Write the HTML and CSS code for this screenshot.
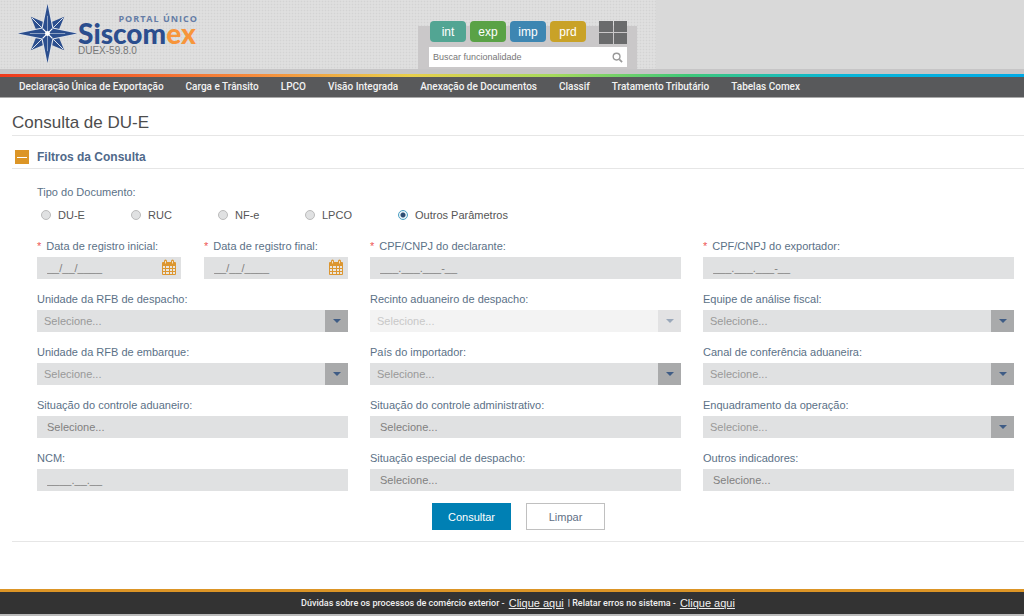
FILE: index.html
```html
<!DOCTYPE html>
<html lang="pt-BR">
<head>
<meta charset="utf-8">
<meta name="viewport" content="width=device-width, initial-scale=1">
<title>Consulta de DU-E</title>
<link rel="stylesheet" href="styles.css">
</head>
<body>
<header class="header">
  <div class="brand">
    <svg class="star" viewBox="0 0 60 60" aria-hidden="true">
      <path d="M13 13 30 20 47 13 40 30 47 47 30 40 13 47 20 30Z" fill="#2b4e8e"/>
      <path d="M14 14 46 46M46 14 14 46" stroke="#dfe5ee" stroke-width="1"/>
      <path d="M30 2 35 25 58 30 35 35 30 58 25 35 2 30 25 25Z" fill="none" stroke="#dfe3ea" stroke-width="2.500"/>
      <path d="M30 0 35 25 60 30 35 35 30 60 25 35 0 30 25 25Z" fill="#2b4e8e"/>
      <path d="M30 12V48M12 30H48" stroke="#b9c6da" stroke-width=".7"/>
      <path d="M25 25 35 35M35 25 25 35" stroke="#fff" stroke-width="1.200"/>
      <circle cx="30" cy="30" r="2.500" fill="#fff"/>
    </svg>
    <div class="brand-text">
      <span class="brand-top">PORTAL ÚNICO</span>
      <span class="brand-name">Siscom<span class="brand-accent">ex</span></span>
      <span class="brand-version">DUEX-59.8.0</span>
    </div>
  </div>
  <div class="tools">
    <div class="tabs">
      <button type="button" class="tab tab-int">int</button>
      <button type="button" class="tab tab-exp">exp</button>
      <button type="button" class="tab tab-imp">imp</button>
      <button type="button" class="tab tab-prd">prd</button>
      <button type="button" class="apps" aria-label="Aplicações"><i></i><i></i><i></i><i></i></button>
    </div>
    <div class="search">
      <input type="text" placeholder="Buscar funcionalidade" aria-label="Buscar funcionalidade">
      <button type="button" aria-label="Buscar"><svg viewBox="0 0 12 12" aria-hidden="true"><circle cx="5" cy="5" r="3.700" fill="none" stroke="#999" stroke-width="1.500"/><path d="M8 8 11 11" stroke="#999" stroke-width="1.800"/></svg></button>
    </div>
  </div>
</header>
<nav class="nav">
  <a href="#">Declaração Única de Exportação</a>
  <a href="#">Carga e Trânsito</a>
  <a href="#">LPCO</a>
  <a href="#">Visão Integrada</a>
  <a href="#">Anexação de Documentos</a>
  <a href="#">Classif</a>
  <a href="#">Tratamento Tributário</a>
  <a href="#">Tabelas Comex</a>
</nav>
<main class="main">
  <h1 class="title">Consulta de DU-E</h1>
  <h2 class="section"><button type="button" class="toggle" aria-label="Recolher filtros"></button>Filtros da Consulta</h2>
  <form class="form">
    <fieldset class="types">
      <legend>Tipo do Documento:</legend>
      <div class="radios">
        <label><input type="radio" name="tipo">DU-E</label>
        <label><input type="radio" name="tipo">RUC</label>
        <label><input type="radio" name="tipo">NF-e</label>
        <label><input type="radio" name="tipo">LPCO</label>
        <label><input type="radio" name="tipo" checked>Outros Parâmetros</label>
      </div>
    </fieldset>
    <div class="grid">
      <div class="dates">
        <div class="field">
          <label for="ini" class="required">Data de registro inicial:</label>
          <div class="box"><input id="ini" type="text" placeholder="__/__/____"><button type="button" class="cal" aria-label="Abrir calendário"><svg viewBox="0 0 16 16" aria-hidden="true"><rect x="1" y="2" width="14" height="13" rx="1" fill="#dc9630"/><path d="M4.500 1v2M11.500 1v2" stroke="#dc9630" stroke-width="3" stroke-linecap="round"/><path d="M4.500 1v2.500M11.500 1v2.500" stroke="#f4dfbd" stroke-width="1"/><path d="M2 6h2v2h-2zM5 6h3v2h-3zM9 6h2v2h-2zM12 6h2v2h-2zM2 9h2v2h-2zM5 9h3v2h-3zM9 9h2v2h-2zM12 9h2v2h-2zM2 12h2v2h-2zM5 12h3v2h-3zM9 12h2v2h-2zM12 12h2v2h-2z" fill="#eae6de"/></svg></button></div>
        </div>
        <div class="field">
          <label for="fim" class="required">Data de registro final:</label>
          <div class="box"><input id="fim" type="text" placeholder="__/__/____"><button type="button" class="cal" aria-label="Abrir calendário"><svg viewBox="0 0 16 16" aria-hidden="true"><rect x="1" y="2" width="14" height="13" rx="1" fill="#dc9630"/><path d="M4.500 1v2M11.500 1v2" stroke="#dc9630" stroke-width="3" stroke-linecap="round"/><path d="M4.500 1v2.500M11.500 1v2.500" stroke="#f4dfbd" stroke-width="1"/><path d="M2 6h2v2h-2zM5 6h3v2h-3zM9 6h2v2h-2zM12 6h2v2h-2zM2 9h2v2h-2zM5 9h3v2h-3zM9 9h2v2h-2zM12 9h2v2h-2zM2 12h2v2h-2zM5 12h3v2h-3zM9 12h2v2h-2zM12 12h2v2h-2z" fill="#eae6de"/></svg></button></div>
        </div>
      </div>
      <div class="field"><label for="decl" class="required">CPF/CNPJ do declarante:</label><div class="box"><input id="decl" type="text" placeholder="___.___.___-__"></div></div>
      <div class="field"><label for="exp" class="required">CPF/CNPJ do exportador:</label><div class="box"><input id="exp" type="text" placeholder="___.___.___-__"></div></div>

      <div class="field"><label for="urfd">Unidade da RFB de despacho:</label><div class="combo"><select id="urfd"><option>Selecione...</option></select><span class="arrow"></span></div></div>
      <div class="field"><label for="rec">Recinto aduaneiro de despacho:</label><div class="combo disabled"><select id="rec" disabled><option>Selecione...</option></select><span class="arrow"></span></div></div>
      <div class="field"><label for="eq">Equipe de análise fiscal:</label><div class="combo"><select id="eq"><option>Selecione...</option></select><span class="arrow"></span></div></div>

      <div class="field"><label for="urfe">Unidade da RFB de embarque:</label><div class="combo"><select id="urfe"><option>Selecione...</option></select><span class="arrow"></span></div></div>
      <div class="field"><label for="pais">País do importador:</label><div class="combo"><select id="pais"><option>Selecione...</option></select><span class="arrow"></span></div></div>
      <div class="field"><label for="canal">Canal de conferência aduaneira:</label><div class="combo"><select id="canal"><option>Selecione...</option></select><span class="arrow"></span></div></div>

      <div class="field"><label for="sitc">Situação do controle aduaneiro:</label><div class="box"><input id="sitc" type="text" placeholder="Selecione..."></div></div>
      <div class="field"><label for="sita">Situação do controle administrativo:</label><div class="box"><input id="sita" type="text" placeholder="Selecione..."></div></div>
      <div class="field"><label for="enq">Enquadramento da operação:</label><div class="combo"><select id="enq"><option>Selecione...</option></select><span class="arrow"></span></div></div>

      <div class="field"><label for="ncm">NCM:</label><div class="box"><input id="ncm" type="text" placeholder="____.__.__"></div></div>
      <div class="field"><label for="site">Situação especial de despacho:</label><div class="box"><input id="site" type="text" placeholder="Selecione..."></div></div>
      <div class="field"><label for="out">Outros indicadores:</label><div class="box"><input id="out" type="text" placeholder="Selecione..."></div></div>
    </div>
    <div class="actions">
      <button type="submit" class="btn btn-primary">Consultar</button>
      <button type="reset" class="btn">Limpar</button>
    </div>
  </form>
</main>
<footer class="footer">
  <span>Dúvidas sobre os processos de comércio exterior -</span>
  <a href="#">Clique aqui</a>
  <span class="divider">| Relatar erros no sistema -</span>
  <a href="#">Clique aqui</a>
</footer>
</body>
</html>
```
FILE: styles.css
```css
* { box-sizing: border-box; }
body {
  margin: 0;
  min-height: 100vh;
  display: flex;
  flex-direction: column;
  background: #fff;
  color: #555;
  font: 11px/14px "Liberation Sans", Arial, sans-serif;
}
button, input, select { font: inherit; color: inherit; border: 0; margin: 0; padding: 0; background: none; border-radius: 0; }

.header {
  display: grid;
  grid-template-columns: 418px 219px 1fr;
  min-height: 74px;
  border-bottom: 5px solid #c6c5c6;
  background:
    linear-gradient(#d9d9d9, #d9d9d9) 656px 0 no-repeat,
    radial-gradient(circle at center, #d3d3d3 0, #dcdcdc 1px, #e4e4e4 2px) 0 0 / 3px 3px;
}
.brand { display: flex; align-items: flex-start; padding: 4px 0 0 18px; }
.star { width: 59px; height: 59px; flex: none; }
.brand-text { display: flex; flex-direction: column; width: 121px; padding: 9px 0 0 1px; }
.brand-top { font: bold 9px/12px "Open Sans", sans-serif; letter-spacing: 1px; color: #647ca6; align-self: flex-end; }
.brand-name { font: 900 28px/16px Lato, sans-serif; color: #2b4e8e; }
.brand-accent { color: #f7953b; }
.brand-version { padding-top: 4px; font-size: 10px; line-height: 12px; color: #777; }

.tools {
  display: flex;
  flex-direction: column;
  gap: 3px;
  padding: 21px 10px 2px 11px;
  background: linear-gradient(#cac8c9, #cac8c9) 0 5px no-repeat;
  background-position: 0 26px;
}
.tabs { display: flex; gap: 4px; padding-left: 1px; }
.tab { width: 36px; height: 21px; border-radius: 4px; color: #fff; font-size: 12px; }
.tab-int { background: #52a593; }
.tab-exp { background: #5aa246; }
.tab-imp { background: #3d86b2; }
.tab-prd { background: #c9a227; }
.apps { display: grid; grid-template-columns: 1fr 1fr; gap: 1px; width: 28px; height: 23px; margin-left: auto; }
.apps i { background: #6a6b6c; }
.search { display: flex; align-items: center; height: 20px; background: #fff; }
.search input { flex: 1; min-width: 0; height: 20px; padding: 0 4px; font-size: 9px; color: #777; }
.search input::placeholder { color: #777; opacity: 1; }
.search button { width: 20px; height: 20px; display: grid; place-items: center; }
.search svg { width: 11px; height: 11px; }

.nav {
  display: flex;
  gap: 22px;
  padding: 0 19px;
  line-height: 20px;
  font-family: Roboto, "Liberation Sans", sans-serif;
  font-size: 10px;
  font-weight: 500;
  background: #58595b;
  border-top: 3px solid;
  border-image: linear-gradient(90deg, #f03a1c, #f58b3c 25%, #e8cf4c 40%, #a5da5c 54%, #3fc878 67%, #08b6d8 82%, #00aae6) 1;
  box-shadow: 0 1px #aaa;
}
.nav a { color: #f2f2f2; text-decoration: none; white-space: nowrap; }

.main { flex: 1; padding: 15px 0 0 12px; }
.title { margin: 0; padding-bottom: 1px; font-size: 17px; line-height: 22px; font-weight: normal; color: #4d4d4d; border-bottom: 1px solid #e6e6e6; }
.section { display: flex; align-items: center; gap: 8px; margin: 0; padding: 11px 0 1px 3px; font-size: 12px; line-height: 20px; color: #50698a; border-bottom: 1px solid #e6e6e6; }
.toggle { display: grid; place-items: center; width: 14px; height: 14px; background: #dc9526; }
.toggle::before { content: ""; width: 10px; height: 1px; background: #fff; }

.form { padding: 16px 10px 11px 25px; border-bottom: 1px solid #e6e6e6; }
.types { margin: 0; padding: 0; border: 0; }
.types legend { padding: 0; color: #5b7187; }
.radios { display: grid; grid-template-columns: 90px 87px 87px 93px auto; justify-content: start; padding: 9px 0 0 4px; }
.radios label { display: flex; align-items: center; gap: 7px; }
.radios input { appearance: none; width: 10px; height: 10px; border: 1px solid #bbb; border-radius: 50%; background: #e0e1e2; }
.radios input:checked { border-color: #4ba0c4; background: radial-gradient(circle, #2e4d73 0 2px, #eaf4f8 3px); }

.grid { display: grid; grid-template-columns: repeat(3, minmax(0, 1fr)); gap: 13px 22px; padding-top: 17px; }
.dates { display: grid; grid-template-columns: 1fr 1fr; gap: 23px; }
.field { display: flex; flex-direction: column; gap: 4px; min-width: 0; }
.field label { color: #5b7187; white-space: nowrap; }
.required::before { content: "*"; color: #ee5555; margin-right: 5px; }
.box { display: flex; align-items: center; height: 22px; background: #e0e1e2; }
.box input { flex: 1; min-width: 0; height: 22px; padding: 0 10px; }
.box input::placeholder { color: #808080; opacity: 1; }
.cal { width: 16px; height: 16px; margin-right: 4px; }
.cal svg { display: block; overflow: visible; }
.combo { display: grid; grid-template-columns: 1fr 23px; height: 22px; background: #e0e1e2; }
.combo select { grid-area: 1 / 1 / 2 / 3; appearance: none; padding: 0 30px 0 7px; color: #999; }
.arrow { grid-area: 1 / 2 / 2 / 3; display: grid; place-items: center; background: #a9aaab; pointer-events: none; }
.arrow::before { content: ""; border: 4px solid transparent; border-top-color: #3f5c85; border-bottom: 0; }
.disabled { background: #f3f3f3; }
.combo select:disabled { color: #c8c8c8; opacity: 1; }
.disabled .arrow { background: #e2e2e3; }
.disabled .arrow::before { border-top-color: #9aa8ba; }

.actions { display: flex; justify-content: center; gap: 15px; padding: 12px 14px 0 0; }
.btn { width: 79px; height: 27px; border: 1px solid #c0c0c0; background: #fff; color: #5f7085; }
.btn-primary { border-color: #0080b4; background: #0080b4; color: #fff; }

.footer {
  display: flex;
  justify-content: center;
  align-items: center;
  gap: 4px;
  height: 27px;
  padding: 0 0 0 12px;
  border-top: 3px solid #dc9526;
  border-bottom: 2px solid #bbb;
  background: #333;
  color: #f0f0f0;
  font-family: Roboto, "Liberation Sans", sans-serif;
  font-size: 9px;
  font-weight: 500;
}
.footer a { color: #f0f0f0; font: 11px/14px "Liberation Sans", Arial, sans-serif; }
```
